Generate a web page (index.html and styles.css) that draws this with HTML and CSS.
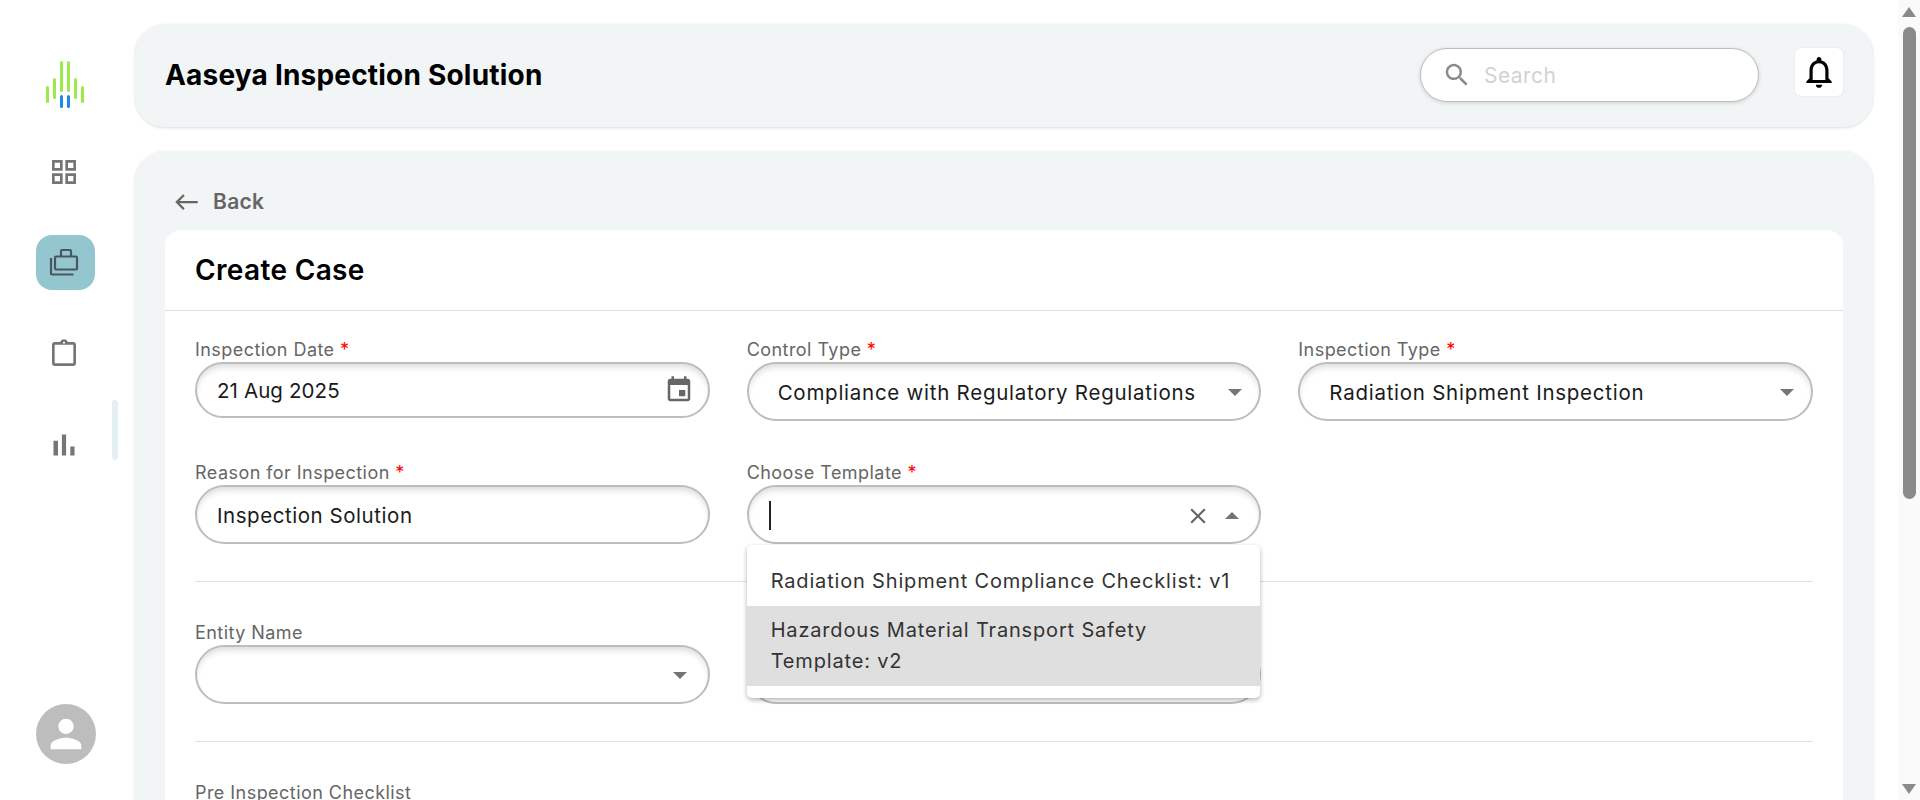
FILE: index.html
```html
<!DOCTYPE html>
<html lang="en">

<head>
  <meta charset="UTF-8">
  <meta name="viewport" content="width=device-width, initial-scale=1.0">
  <title>Create Case</title>
  <link rel="stylesheet" href="styles.css">
</head>

<body>
  <div class="app">
    <!-- sidebar -->
    <aside class="sidebar">
      <svg class="logo" width="38" height="48" viewBox="0 0 38 48">
        <rect x="0" y="25" width="3" height="17" rx="1.5" fill="#9bea4a" />
        <rect x="7" y="17" width="3" height="21" rx="1.5" fill="#9bea4a" />
        <rect x="14" y="0" width="3" height="31" rx="1.5" fill="#9bea4a" />
        <rect x="21" y="0" width="3" height="31" rx="1.5" fill="#9bea4a" />
        <rect x="28" y="17" width="3" height="21" rx="1.5" fill="#9bea4a" />
        <rect x="35" y="25" width="3" height="17" rx="1.5" fill="#9bea4a" />
        <rect x="14" y="34" width="3" height="13" rx="1.5" fill="#1e88e5" />
        <rect x="21" y="34" width="3" height="13" rx="1.5" fill="#1e88e5" />
      </svg>
      <nav class="nav">
        <a class="nav-item">
          <svg width="32" height="32" viewBox="0 0 24 24"><path d="M3 3v8h8V3H3zm6 6H5V5h4v4zm-6 4v8h8v-8H3zm6 6H5v-4h4v4zm4-16v8h8V3h-8zm6 6h-4V5h4v4zm-6 4v8h8v-8h-8zm6 6h-4v-4h4v4z" /></svg>
        </a>
        <a class="nav-item active">
          <svg width="30" height="30" viewBox="0 0 30 30" fill="none" stroke="#48585e" stroke-width="2.2">
            <path d="M7 8.500h20a1 1 0 0 1 1 1v11a1 1 0 0 1-1 1H7a1 1 0 0 1-1-1v-11a1 1 0 0 1 1-1z" />
            <path d="M12 8.500V3a1 1 0 0 1 1-1h8a1 1 0 0 1 1 1v5.500" />
            <path d="M2 10v15.500a1 1 0 0 0 1 1h21.500" />
          </svg>
        </a>
        <a class="nav-item">
          <svg width="32" height="32" viewBox="0 0 24 24"><path d="M19 3h-4.180C14.400 1.840 13.300 1 12 1s-2.400.84-2.820 2H5c-1.100 0-2 .9-2 2v14c0 1.100.9 2 2 2h14c1.100 0 2-.9 2-2V5c0-1.100-.9-2-2-2zm0 16H5V5h14v14zM12 2.750c.41 0 .75.34.75.75s-.34.75-.75.75-.75-.34-.75-.75.34-.75.75-.75z" /></svg>
        </a>
        <a class="nav-item">
          <svg width="36" height="36" viewBox="0 0 24 24"><path d="M5 9.200h3V19H5zM10.600 5h2.800v14h-2.800zm5.600 8H19v6h-2.800z" /></svg>
        </a>
      </nav>
      <div class="side-thumb"></div>
      <div class="avatar">
        <svg width="46" height="46" viewBox="0 0 24 24" fill="#fff"><path d="M12 12c2.210 0 4-1.790 4-4s-1.790-4-4-4-4 1.790-4 4 1.790 4 4 4zm0 2c-2.670 0-8 1.340-8 4v2h16v-2c0-2.660-5.330-4-8-4z" /></svg>
      </div>
    </aside>

    <main class="main">
      <!-- header -->
      <header class="topbar">
        <h1>Aaseya Inspection Solution</h1>
        <div class="search">
          <svg width="30" height="30" viewBox="0 0 24 24" fill="#8a8a8a"><path d="M15.500 14h-.79l-.28-.27C15.410 12.590 16 11.110 16 9.500 16 5.910 13.090 3 9.500 3S3 5.910 3 9.500 5.910 16 9.500 16c1.610 0 3.090-.59 4.230-1.570l.27.28v.79l5 4.990L20.490 19l-4.990-5zm-6 0C7.010 14 5 11.990 5 9.500S7.010 5 9.500 5 14 7.010 14 9.500 11.990 14 9.500 14z" /></svg>
          <span>Search</span>
        </div>
        <button class="bell">
          <svg width="38" height="38" viewBox="0 0 24 24"><path d="M12 22c1.100 0 2-.9 2-2h-4c0 1.100.9 2 2 2zm6-6v-5c0-3.070-1.630-5.640-4.500-6.320V4c0-.83-.67-1.500-1.500-1.500s-1.500.67-1.500 1.500v.68C7.640 5.360 6 7.920 6 11v5l-2 2v1h16v-1l-2-2zm-2 1H8v-6c0-2.480 1.510-4.500 4-4.500s4 2.020 4 4.500v6z" /></svg>
        </button>
      </header>

      <section class="content">
        <a class="back">
          <svg width="27" height="18" viewBox="1 4 22 16"><path d="M9 19l1.410-1.410L5.830 13H22v-2H5.830l4.590-4.590L9 5l-7 7 7 7z" /></svg>
          Back
        </a>

        <div class="card">
          <h2>Create Case</h2>
          <div class="card-body">
            <div class="form-grid">
              <div class="field">
                <label>Inspection Date <em>*</em></label>
                <div class="control short">
                  <span class="value date">21 Aug 2025</span>
                  <svg class="cal" width="30" height="30" viewBox="0 0 24 24"><path d="M17 12h-5v5h5v-5zM16 1v2H8V1H6v2H5c-1.110 0-1.990.9-1.990 2L3 19c0 1.100.89 2 2 2h14c1.100 0 2-.9 2-2V5c0-1.100-.9-2-2-2h-1V1h-2zm3 18H5V8h14v11z" /></svg>
                </div>
              </div>
              <div class="field">
                <label>Control Type <em>*</em></label>
                <div class="control">
                  <span class="value">Compliance with Regulatory Regulations</span>
                  <i class="arrow"></i>
                </div>
              </div>
              <div class="field">
                <label>Inspection Type <em>*</em></label>
                <div class="control">
                  <span class="value">Radiation Shipment Inspection</span>
                  <i class="arrow"></i>
                </div>
              </div>
              <div class="field">
                <label>Reason for Inspection <em>*</em></label>
                <div class="control">
                  <span class="value reason">Inspection Solution</span>
                </div>
              </div>
              <div class="field">
                <label>Choose Template <em>*</em></label>
                <div class="control open">
                  <span class="caret"></span>
                  <svg class="clear" width="26" height="26" viewBox="0 0 24 24"><path d="M19 6.410 17.590 5 12 10.590 6.410 5 5 6.410 10.590 12 5 17.590 6.410 19 12 13.410 17.590 19 19 17.590 13.410 12z" /></svg>
                  <i class="arrow up"></i>
                </div>
                <ul class="menu">
                  <li>Radiation Shipment Compliance Checklist: v1</li>
                  <li class="hover">Hazardous Material Transport Safety Template: v2</li>
                </ul>
              </div>
            </div>

            <hr>

            <div class="form-grid">
              <div class="field">
                <label>Entity Name</label>
                <div class="control">
                  <i class="arrow far"></i>
                </div>
              </div>
              <div class="field">
                <label>&nbsp;</label>
                <div class="control"></div>
              </div>
            </div>

            <hr>

            <div class="field">
              <label>Pre Inspection Checklist</label>
            </div>
          </div>
        </div>
      </section>
    </main>

    <!-- page scrollbar -->
    <div class="scrollbar">
      <i class="sb-up"></i>
      <div class="sb-thumb"></div>
      <i class="sb-down"></i>
    </div>
  </div>
</body>

</html>
```

FILE: styles.css
```css
* {
  box-sizing: border-box;
}

body {
  margin: 0;
  background-color: white;
  font-family: Inter, "Liberation Sans", sans-serif;
}

.app {
  display: flex;
  height: 800px;
  overflow: hidden;
}

/* sidebar */
.sidebar {
  position: relative;
  width: 135px;
  flex-shrink: 0;
  display: flex;
  flex-direction: column;
  align-items: center;
  padding: 61px 5px 36px 0;
}

.logo {
  margin-bottom: 35px;
}

.nav {
  display: flex;
  flex-direction: column;
  gap: 36px;
}

.nav-item {
  width: 59px;
  height: 55px;
  border-radius: 16px;
  display: flex;
  align-items: center;
  justify-content: center;
  fill: #757575;
}

.nav-item svg {
  margin-left: -3px;
}

.nav-item.active {
  background-color: #94c6d0;
}

.side-thumb {
  position: absolute;
  left: 112px;
  top: 400px;
  width: 6px;
  height: 60px;
  border-radius: 3px;
  background-color: #e4eff1;
}

.avatar {
  width: 60px;
  height: 60px;
  margin-top: auto;
  margin-left: 2px;
  border-radius: 50%;
  background-color: #bdbdbd;
  display: flex;
  align-items: center;
  justify-content: center;
}

/* main */
.main {
  flex: 1;
  min-width: 0;
  padding: 24px 25px 0 0;
  display: flex;
  flex-direction: column;
  gap: 24px;
}

.topbar {
  height: 103px;
  flex-shrink: 0;
  display: flex;
  align-items: flex-start;
  padding: 24px 30px 0;
  background-color: #f1f5f6;
  border-radius: 30px;
  box-shadow: 0 1px 3px rgba(0, 0, 0, 0.14);
}

.topbar h1 {
  flex: 1;
  margin: 0;
  font-size: 28px;
  line-height: 55px;
  font-weight: 700;
  color: #000;
  letter-spacing: 0.2px;
}

.search {
  width: 339px;
  height: 54px;
  margin-right: 36px;
  display: flex;
  align-items: center;
  gap: 12px;
  padding-left: 21px;
  background-color: #fff;
  border: 1px solid #bdbdbd;
  border-radius: 27px;
  box-shadow: 0 1px 4px rgba(0, 0, 0, 0.15);
  font-size: 21px;
  letter-spacing: 0.45px;
  color: #d2d2d2;
}

.bell {
  width: 48px;
  height: 48px;
  padding: 0;
  border: none;
  border-radius: 6px;
  background-color: #fff;
  box-shadow: 0 0 2px rgba(0, 0, 0, 0.1);
  display: flex;
  align-items: center;
  justify-content: center;
}

.content {
  flex: 1;
  padding: 0 30px;
  background-color: #f1f5f6;
  border-radius: 30px 30px 0 0;
  box-shadow: 0 1px 3px rgba(0, 0, 0, 0.14);
}

.back {
  height: 79px;
  display: flex;
  align-items: center;
  gap: 13px;
  padding: 22px 0 0 8px;
  font-size: 21px;
  font-weight: 600;
  letter-spacing: 0.3px;
  color: #666;
  fill: #666;
}

.card {
  background-color: #fff;
  border-radius: 16px 16px 0 0;
  height: 600px;
}

.card h2 {
  margin: 0;
  height: 81px;
  padding-left: 30px;
  font-size: 28px;
  line-height: 81px;
  font-weight: 600;
  letter-spacing: 0.35px;
  color: #000;
  border-bottom: 1px solid #e0e0e0;
}

.card-body {
  padding: 26px 30px 0;
}

.form-grid {
  display: grid;
  grid-template-columns: repeat(3, 1fr);
  gap: 39px 37px;
  align-items: start;
}

.field {
  position: relative;
}

.field label {
  display: block;
  height: 25px;
  font-size: 18px;
  line-height: 26px;
  letter-spacing: 0.45px;
  color: #666;
}

.field label em {
  color: #f00;
  font-style: normal;
}

.control {
  height: 59px;
  display: flex;
  align-items: center;
  padding: 2px 17px 0 29px;
  border: 2px solid #bdbdbd;
  border-radius: 30px;
  box-shadow: inset 0 5px 6px -2px rgba(0, 0, 0, 0.14);
  font-size: 20.5px;
  letter-spacing: 0.74px;
  color: #1a1a1a;
}

.control.short {
  height: 56px;
  padding-top: 0;
}

.value {
  flex: 1;
  white-space: nowrap;
}

.value.date {
  margin-left: -9px;
  letter-spacing: 0.1px;
}

.value.reason {
  margin-left: -9px;
  letter-spacing: 0.55px;
}

.cal {
  fill: #666;
  margin-right: -3px;
}

.arrow {
  width: 0;
  height: 0;
  margin-left: auto;
  border-left: 7px solid transparent;
  border-right: 7px solid transparent;
  border-top: 7px solid #757575;
}

.arrow.far {
  margin-right: 4px;
}

.arrow.up {
  margin-left: 14px;
  margin-right: 3px;
  border-top: none;
  border-bottom: 7px solid #757575;
}

.caret {
  width: 2px;
  height: 29px;
  margin-left: -9px;
  background-color: #222;
}

.clear {
  margin-left: auto;
  fill: #666;
}

.menu {
  position: absolute;
  top: 85px;
  left: 0;
  right: 1px;
  z-index: 5;
  margin: 0;
  padding: 12px 0;
  list-style: none;
  background-color: #fff;
  border-radius: 5px;
  box-shadow: 0 2px 5px rgba(0, 0, 0, 0.3);
  font-size: 20px;
  line-height: 31px;
  letter-spacing: 0.83px;
  color: #333;
}

.menu li {
  padding: 9px 24px;
}

.menu li.hover {
  background-color: #dfdfdf;
}

hr {
  margin: 37px 0 38px;
  border: none;
  border-top: 1px solid #e0e0e0;
}

/* scrollbar drawn at the right */
.scrollbar {
  width: 22px;
  flex-shrink: 0;
  display: flex;
  flex-direction: column;
  align-items: center;
  padding-top: 7px;
  background-color: #fafafa;
}

.sb-up,
.sb-down {
  width: 0;
  height: 0;
  border-left: 7px solid transparent;
  border-right: 7px solid transparent;
}

.sb-up {
  border-bottom: 10px solid #8a8a8a;
}

.sb-down {
  margin-top: auto;
  margin-bottom: 6px;
  border-top: 10px solid #8a8a8a;
}

.sb-thumb {
  width: 13px;
  height: 472px;
  margin-top: 10px;
  border-radius: 7px;
  background-color: #8a8a8a;
}
```
